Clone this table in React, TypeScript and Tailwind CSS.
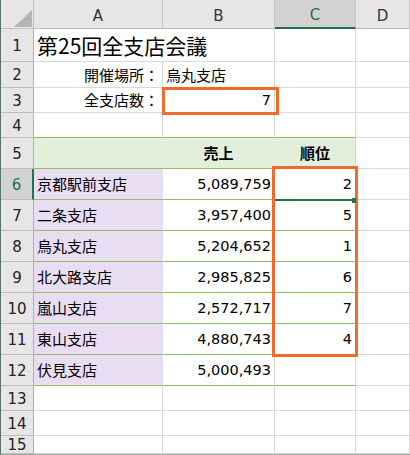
import React from "react";

type Cell = { t?: string; al?: "l" | "r" | "c"; num?: boolean; bold?: boolean; title?: boolean };
type Row = { n: number; h: string; kind: "plain" | "line" | "head" | "tbl"; cells: Cell[] };

const rows: Row[] = [
  { n: 1, h: "h-[33px]", kind: "plain", cells: [{ t: "第25回全支店会議", title: true }, {}, {}, {}] },
  { n: 2, h: "h-[26px]", kind: "plain", cells: [{ t: "開催場所：", al: "r" }, { t: "烏丸支店" }, {}, {}] },
  { n: 3, h: "h-[25px]", kind: "plain", cells: [{ t: "全支店数：", al: "r" }, { t: "7", al: "r", num: true }, {}, {}] },
  { n: 4, h: "h-[25px]", kind: "line", cells: [{}, {}, {}, {}] },
  { n: 5, h: "h-[31px]", kind: "head", cells: [{}, { t: "売上", al: "c", bold: true }, { t: "順位", al: "c", bold: true }, {}] },
  { n: 6, h: "h-[31px]", kind: "tbl", cells: [{ t: "京都駅前支店" }, { t: "5,089,759", al: "r", num: true }, { t: "2", al: "r", num: true }, {}] },
  { n: 7, h: "h-[31px]", kind: "tbl", cells: [{ t: "二条支店" }, { t: "3,957,400", al: "r", num: true }, { t: "5", al: "r", num: true }, {}] },
  { n: 8, h: "h-[31px]", kind: "tbl", cells: [{ t: "烏丸支店" }, { t: "5,204,652", al: "r", num: true }, { t: "1", al: "r", num: true }, {}] },
  { n: 9, h: "h-[31px]", kind: "tbl", cells: [{ t: "北大路支店" }, { t: "2,985,825", al: "r", num: true }, { t: "6", al: "r", num: true }, {}] },
  { n: 10, h: "h-[31px]", kind: "tbl", cells: [{ t: "嵐山支店" }, { t: "2,572,717", al: "r", num: true }, { t: "7", al: "r", num: true }, {}] },
  { n: 11, h: "h-[31px]", kind: "tbl", cells: [{ t: "東山支店" }, { t: "4,880,743", al: "r", num: true }, { t: "4", al: "r", num: true }, {}] },
  { n: 12, h: "h-[31px]", kind: "tbl", cells: [{ t: "伏見支店" }, { t: "5,000,493", al: "r", num: true }, {}, {}] },
  { n: 13, h: "h-[25px]", kind: "plain", cells: [{}, {}, {}, {}] },
  { n: 14, h: "h-[25px]", kind: "plain", cells: [{}, {}, {}, {}] },
  { n: 15, h: "h-[18px]", kind: "plain", cells: [{}, {}, {}, {}] },
];

const colW = ["w-[129px]", "w-[112px]", "w-[81px]", "w-[54px]"];
const jp = "font-['Noto_Sans_CJK_JP',sans-serif]";
const lat = "font-['DejaVu_Sans','Noto_Sans_CJK_JP',sans-serif]";

function DataCell({ c, i, row }: { c: Cell; i: number; row: Row }) {
  const framed = row.kind !== "plain" && i < 3;

  let bg = "";
  if (row.kind === "head" && i < 3) bg = "bg-[#e2efda]";
  if (row.kind === "tbl" && i === 0) bg = "bg-[#e9ddf4]";

  let right = "border-r-[#d9d9d9]";
  if (row.n === 1 && i === 0) right = "border-r-transparent";
  if (row.kind === "head" && i < 2) right = "border-r-[#e2efda]";
  if (row.kind === "tbl" && i === 0) right = "border-r-[#e9ddf4]";

  const bottom = framed ? "border-b-[#8cc15c]" : "border-b-[#d9d9d9]";

  let align = "justify-start";
  if (c.al === "r") align = "justify-end";
  if (c.al === "c") align = "justify-center";

  let text = `${jp} text-[15px]`;
  if (c.num) text = `${lat} text-[14.5px]`;
  if (c.title) text = `${jp} text-[21px] relative z-10`;

  return (
    <div className={`${colW[i]} ${bg} ${right} ${bottom} border-r border-b flex items-center ${align} px-[3px] overflow-visible whitespace-nowrap`}>
      {c.t && <span className={`${text} ${c.bold ? "font-bold" : ""} leading-[20px] text-black`}>{c.t}</span>}
    </div>
  );
}

export default function App() {
  return (
    <div className="relative w-[410px] h-[455px] bg-white overflow-hidden border-l border-l-[#5b7363] border-b border-b-[#a6a6a6]">
      {/* Column headers */}
      <div className="flex h-[29px]">
        <div className="w-[33px] bg-[#e6e6e6] border-r border-b border-[#bfbfbf] relative">
          <svg className="absolute inset-0" width="33" height="29">
            <polygon points="13,27 31,27 31,10" fill="#b4b4b4" />
          </svg>
        </div>
        {["A", "B", "C", "D"].map((l, i) => (
          <div
            key={l}
            className={`${colW[i]} flex items-center justify-center pt-[4px] border-r border-r-[#c8c8c8] ${
              l === "C" ? "bg-[#d2d2d2] border-b-2 border-b-[#217346] text-[#217346]" : "bg-[#e6e6e6] border-b border-b-[#bfbfbf] text-[#333]"
            } ${lat} text-[15px]`}
          >
            {l}
          </div>
        ))}
      </div>

      {/* Rows */}
      {rows.map((row) => (
        <div key={row.n} className={`flex ${row.h}`}>
          <div
            className={`w-[33px] flex items-center justify-center pt-[2px] border-b border-b-[#bfbfbf] ${lat} text-[15px] ${
              row.n === 6
                ? "bg-[#d2d2d2] border-r-2 border-r-[#217346] text-[#217346]"
                : "bg-[#e6e6e6] border-r border-r-[#b0b0b0] text-[#222]"
            }`}
          >
            {row.n}
          </div>
          {row.cells.map((c, i) => (
            <DataCell key={i} c={c} i={i} row={row} />
          ))}
        </div>
      ))}

      {/* Active cell C6 */}
      <div className="absolute left-[274px] top-[199px] w-[79px] h-[2px] bg-[#217346]" />

      {/* Orange highlight boxes */}
      <div className="absolute left-[161px] top-[87px] w-[117px] h-[28px] border-[3px] border-[#f26b2a]" />
      <div className="absolute left-[271px] top-[166px] w-[86px] h-[191px] border-[3px] border-[#f26b2a]" />

      <div className="absolute left-[351px] top-[198px] w-[4px] h-[5px] bg-[#217346]" />
    </div>
  );
}
